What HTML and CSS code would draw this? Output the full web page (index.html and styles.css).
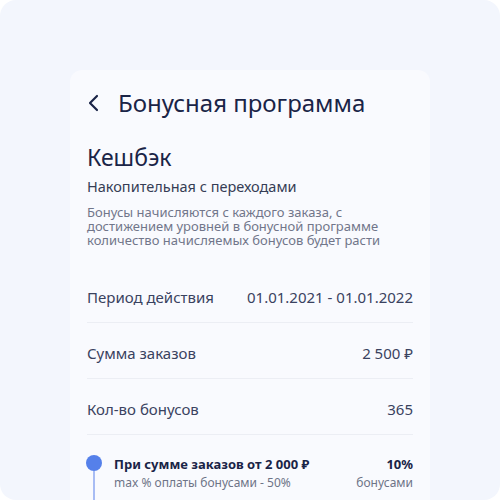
FILE: index.html
```html
<!DOCTYPE html>
<html lang="ru">
<head>
<meta charset="utf-8">
<link rel="stylesheet" href="styles.css">
</head>
<body>
<div class="page">
  <div class="card">
    <div class="header">
      <svg class="back" width="12" height="18" viewBox="0 0 12 18"><path d="M10 2 L3 9 L10 16" fill="none" stroke="#1a2447" stroke-width="2.2" stroke-linecap="round" stroke-linejoin="round"/></svg>
      <h1 class="title">Бонусная программа</h1>
    </div>
    <h2 class="name">Кешбэк</h2>
    <div class="type">Накопительная с переходами</div>
    <p class="desc">Бонусы начисляются с каждого заказа, с достижением уровней в бонусной программе количество начисляемых бонусов будет расти</p>
    <div class="rows">
      <div class="row"><span>Период действия</span><span>01.01.2021 - 01.01.2022</span></div>
      <div class="row"><span>Сумма заказов</span><span>2 500 ₽</span></div>
      <div class="row"><span>Кол-во бонусов</span><span>365</span></div>
    </div>
    <div class="level">
      <div class="track"><span class="dot"></span><span class="line"></span></div>
      <div class="level-info">
        <div class="level-title">При сумме заказов от 2 000 ₽</div>
        <div class="level-sub">max % оплаты бонусами - 50%</div>
      </div>
      <div class="level-val">
        <div class="level-pct">10%</div>
        <div class="level-sub">бонусами</div>
      </div>
    </div>
  </div>
</div>
</body>
</html>
```
FILE: styles.css
```css
* { box-sizing: border-box; }
html, body { margin: 0; padding: 0; background: #ffffff; }
body { font-family: "Noto Sans", "Open Sans", sans-serif; color: #1a2447; }
.page {
  width: 500px; height: 500px; overflow: hidden;
  background: #f3f6fd; border-radius: 16px;
  padding: 70px 70px 0;
}
.card {
  background: #f9fafe; border-radius: 12px 12px 0 0;
  height: 430px; padding: 16px 17px 0 17px;
}
.header { display: flex; align-items: center; gap: 19px; height: 34px; padding-left: 0; }
.back { display: block; }
.title { margin: 0; font-size: 24px; font-weight: 400; line-height: 34px; letter-spacing: 0; }
.name { margin: 23px 0 0; font-size: 23px; font-weight: 400; line-height: 28px; }
.type { margin-top: 6px; font-size: 14.5px; line-height: 18px; color: #363d55; }
.desc { margin: 10px 0 0; max-width: 305px; font-size: 13px; line-height: 14px; color: #71768a; }
.rows { margin-top: 20px; }
.row {
  display: flex; justify-content: space-between; align-items: center;
  height: 56px; padding-top: 4px; border-bottom: 1px solid #eceef4;
  font-size: 15px; color: #3a4260;
}
.level { display: flex; margin-top: 20px; gap: 12px; margin-left: -1px; }
.track { width: 16px; display: flex; flex-direction: column; align-items: center; }
.dot { width: 16px; height: 16px; border-radius: 50%; background: #5580ea; }
.line { width: 2px; height: 40px; background: #a8bcf4; }
.level-info { flex: 1; }
.level-title { font-size: 13px; font-weight: 700; line-height: 18px; color: #1a2447; }
.level-sub { margin-top: 2px; font-size: 12px; line-height: 16px; color: #6e7487; }
.level-val { text-align: right; }
.level-pct { font-size: 13px; font-weight: 700; line-height: 18px; color: #1a2447; }
```
